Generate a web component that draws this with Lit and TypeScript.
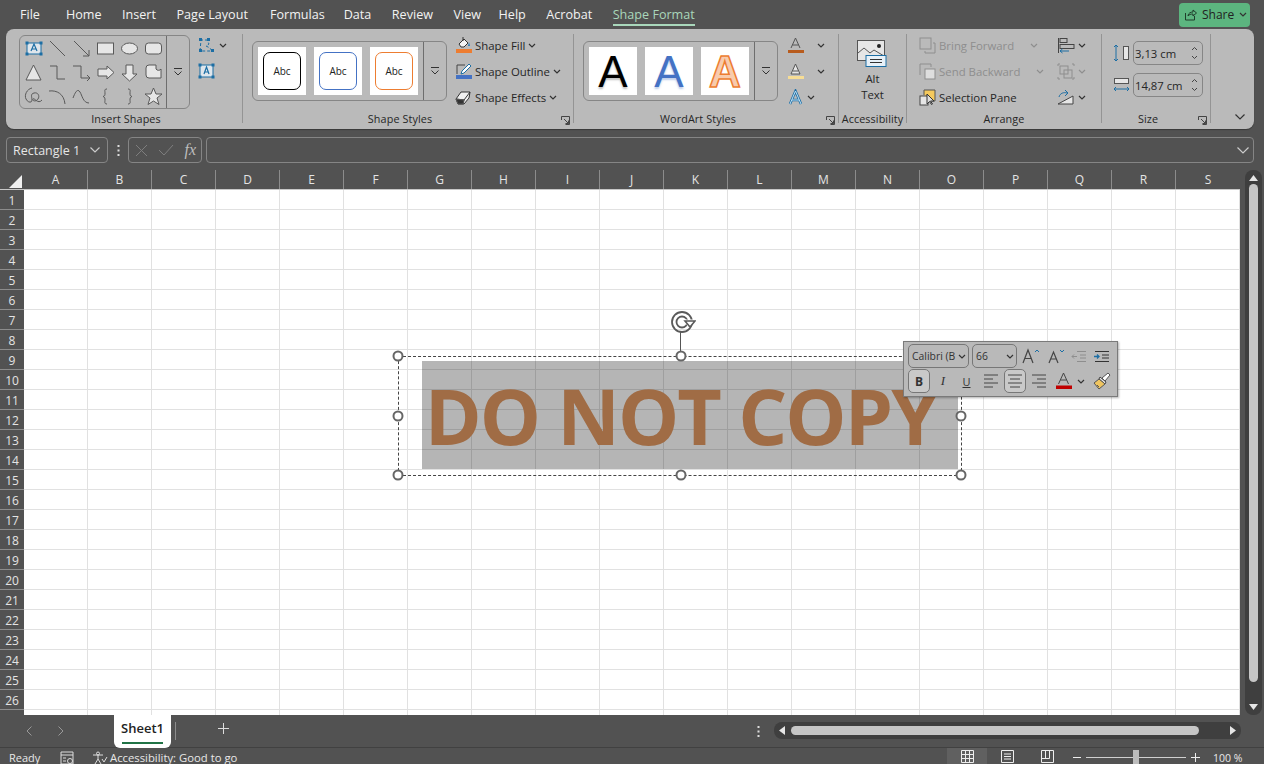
import { LitElement, html, css, svg } from "lit";
import { customElement } from "lit/decorators.js";

const ic = (w: number, h: number, body: unknown, cls = "") =>
  html`<svg class="ic ${cls}" width=${w} height=${h} viewBox="0 0 ${w} ${h}" fill="none" stroke="#595959" stroke-width="1">${body}</svg>`;

const chev = (cls = "") => html`<svg class="chev ${cls}" width="8" height="5" viewBox="0 0 8 5" fill="none" stroke="currentColor" stroke-width="1.2"><path d="M1 1l3 3 3-3"/></svg>`;
const launcher = html`<svg class="launch" width="9" height="9" viewBox="0 0 9 9" fill="none" stroke="#444" stroke-width="1"><path d="M.5 4V.5H8.5V8.5H4.5M3 3l4.5 4.5M7.5 4.5v3h-3"/></svg>`;
const scroller = html`<div class="scroller"><svg width="10" height="10" viewBox="0 0 10 10" fill="none" stroke="#333"><path d="M1 1.5h8" /><path d="M1.5 4.5L5 8l3.5-3.5" /></svg></div>`;

const F = "#e6e6e6";
const shapes = [
  svg`<rect x="4" y="5" width="14" height="11" fill="#dfe6ec" stroke="#1c6ea4"/><path d="M8 13l3-7 3 7M9 11h4" stroke="#1c6ea4" stroke-width="1.2"/><g fill="#1c6ea4" stroke="none"><rect x="2.5" y="3.5" width="3" height="3"/><rect x="16.5" y="3.5" width="3" height="3"/><rect x="2.5" y="14.5" width="3" height="3"/><rect x="16.5" y="14.5" width="3" height="3"/></g>`,
  svg`<path d="M3 3l15 15"/>`,
  svg`<path d="M3 3l15 15M18 12v6h-6"/>`,
  svg`<rect x="2.5" y="5" width="16" height="11" fill="${F}"/>`,
  svg`<ellipse cx="10.5" cy="10.5" rx="8" ry="5.5" fill="${F}"/>`,
  svg`<rect x="2.5" y="5" width="16" height="11" rx="3" fill="${F}"/>`,
  svg`<path d="M10.5 3l7.5 15H3z" fill="${F}"/>`,
  svg`<path d="M3 4h7v13h8"/>`,
  svg`<path d="M2 4h8v12h9M16 13l3 3-3 3"/>`,
  svg`<path d="M3 7h9V4l7 6.5-7 6.5v-3H3z" fill="${F}"/>`,
  svg`<path d="M7 3h7v9h4l-7.5 7L3 12h4z" fill="${F}"/>`,
  svg`<path d="M3 6a3 3 0 013-3h7v4a3 3 0 005 0v9H6a3 3 0 01-3-3z" fill="${F}"/>`,
  svg`<path d="M9 2C4 3 1 9 3 13s6 4 6 1-2-6 2-7 6 3 4 6-6 2-5 0 5 6 9 1"/>`,
  svg`<path d="M2 5c8-1 15 3 16 13"/>`,
  svg`<path d="M2 12c3-8 5-9 7-6s3 11 9 11"/>`,
  svg`<path d="M12 3c-3 0-2 2-2 4s0 3-2 3.500c2 .5 2 2 2 3.500s-1 4 2 4"/>`,
  svg`<path d="M9 3c3 0 2 2 2 4s0 3 2 3.500c-2 .5-2 2-2 3.500s1 4-2 4"/>`,
  svg`<path d="M10.500 2l2.500 6h6l-5 4 2 6.500-5.500-3.500L5 18.500 7 12 2 8h6z" fill="${F}"/>`,
];

const alignL = svg`<path d="M0 1h14M0 5h9M0 9h14M0 13h9" stroke="#444"/>`;
const alignC = svg`<path d="M0 1h14M2 5h10M0 9h14M2 13h10" stroke="#444"/>`;
const alignR = svg`<path d="M0 1h14M5 5h9M0 9h14M5 13h9" stroke="#444"/>`;

@customElement("app-root")
export class AppRoot extends LitElement {
  static styles = css`
    :host { display: flex; flex-direction: column; width: 1264px; height: 764px; overflow: hidden; background: #525252; color: #f2f2f2; font-family: "Open Sans", "Noto Sans", sans-serif; font-size: 12px; }
    svg { display: block; flex: none; }
    .menu { height: 29px; flex: none; display: flex; align-items: center; padding-left: 20px; font-size: 12.600px; }
    .menu .tab { margin-right: 20.500px; position: relative; white-space: nowrap; }
    .menu .tab.first { margin-right: 26px; }
    .menu .tab.pl { margin-right: 22px; }
    .menu .tab.fm { margin-right: 19px; }
    .menu .tab.vw-t { margin-right: 17.500px; }
    .menu .tab.active { color: #a9d7bb; }
    .menu .tab.active::after { content: ""; position: absolute; left: 0; right: 0; bottom: -3px; height: 2px; background: #a9d7bb; }
    .share { margin-left: auto; margin-right: 14px; width: 71px; height: 24px; border-radius: 4px; background: #5cb57f; color: #222; display: flex; align-items: center; gap: 5px; padding-left: 5px; box-sizing: border-box; font-size: 12px; }
    .ribbon { flex: none; height: 100px; margin: 0 10px 0 6px; background: #bababa; border-radius: 8px; display: flex; color: #262626; font-size: 11.400px; box-shadow: 0 1px 1px rgba(0,0,0,.3); }
    .sep { width: 1px; background: #949494; margin: 5px 0 6px; flex: none; }
    .grp { flex: none; display: flex; flex-direction: column; }
    .body { flex: none; height: 81px; display: flex; box-sizing: border-box; }
    .glabel { flex: none; height: 18px; line-height: 18px; text-align: center; position: relative; font-size: 10.800px; letter-spacing: .1px; white-space: nowrap; }
    .launch { position: absolute; right: 3px; top: 6px; }
    .gallery { flex: none; display: flex; border: 1px solid #868686; border-radius: 6px; box-sizing: border-box; }
    .scroller { flex: none; width: 23px; box-sizing: border-box; border-left: 1px solid #6e6e6e; display: flex; align-items: center; justify-content: center; }
    .shapes { display: grid; grid-template-columns: repeat(6, 24px); grid-auto-rows: 24px; padding: 0; place-items: center; width: 146px; box-sizing: border-box; margin-left: 1px; }
    .swatches { display: flex; gap: 8px; padding: 5px; }
    .sw { width: 48px; height: 48px; background: #fff; display: flex; align-items: center; justify-content: center; }
    .abc { width: 38px; height: 38px; box-sizing: border-box; border-radius: 7px; border: 1.500px solid #000; display: flex; align-items: center; justify-content: center; color: #222; font-size: 10px; }
    .abc.b { border: 1px solid #4472c4; }
    .abc.o { border: 1px solid #ed7d31; }
    .wa { font-family: "Liberation Sans", sans-serif; font-size: 44px; line-height: 1; position: relative; top: 1px; }
    .wa.k { color: #000; text-shadow: 0 2px 2px rgba(0,0,0,.25); }
    .wa.bl { color: #4472c4; text-shadow: 0 2px 2px rgba(68,114,196,.35); }
    .wa.or { color: #f8cbad; font-weight: 700; -webkit-text-stroke: 1.500px #ed7d31; }
    .col { flex: none; display: flex; flex-direction: column; }
    .row { height: 26px; display: flex; align-items: center; white-space: nowrap; }
    .chev { color: #333; }
    .chev.off { color: #8e8e8e; }
    .off { color: #8e8e8e; }
    .edit { margin: 6px 0 0 7px; gap: 6px; }
    .edit .row { gap: 2px; }
    .btns { margin: 3px 0 0 8px; }
    .btns .row { gap: 3px; }
    .wacol { margin: 3px 0 0 9px; }
    .wacol .row { gap: 3px; }
    .alt { flex: 1; display: flex; flex-direction: column; align-items: center; padding-top: 10px; line-height: 16px; font-size: 11.400px; }
    .alt svg { margin-bottom: 4px; }
    .arr { margin: 3px 0 0 12px; width: 126px; }
    .arr .row { gap: 3px; }
    .arr .row .chev { margin-left: 13px; }
    .arr2 { margin: 3px 0 0 12px; }
    .arr2 .row { gap: 3px; }
    .size { margin: 12px 0 0 11px; gap: 8px; }
    .size .row { height: 24px; gap: 3px; }
    .spin { width: 70px; height: 24px; box-sizing: border-box; border: 1px solid #868686; border-radius: 5px; display: flex; align-items: center; padding: 0 4px 0 1px; justify-content: space-between; font-size: 11.300px; }
    .collapse { flex: 1; position: relative; }
    .collapse svg { position: absolute; right: 9px; bottom: 9px; }
    .fbar { flex: none; height: 26px; margin: 8px 10px 7px 6px; display: flex; color: #e6e6e6; }
    .fbox { border: 1px solid #858585; border-radius: 4px; box-sizing: border-box; display: flex; align-items: center; }
    .name { width: 102px; padding: 0 7px 0 6px; justify-content: space-between; font-size: 12.500px; }
    .dots { width: 20px; display: flex; align-items: center; justify-content: center; }
    .fx { width: 74px; padding: 0 5px 0 6px; justify-content: space-between; margin-right: 4px; }
    .fxt { font-family: "Liberation Serif", serif; font-style: italic; font-size: 16px; color: #bdbdbd; }
    .finput { flex: 1; justify-content: flex-end; padding-right: 4px; }
    .main { flex: none; height: 545px; display: flex; }
    .work { flex: none; width: 1240px; display: flex; flex-direction: column; }
    .cols { flex: none; height: 20px; display: flex; box-sizing: border-box; border-bottom: 1px solid #c8c8c8; font-size: 12px; color: #e4e4e4; }
    .corner { flex: none; width: 24px; position: relative; }
    .corner svg { position: absolute; left: 9px; top: 5px; }
    .col-h { flex: none; width: 64px; box-sizing: border-box; border-right: 1px solid #8c8c8c; text-align: center; line-height: 19px; }
    .col-h:last-child { border-right: 0; }
    .below { flex: 1; display: flex; min-height: 0; overflow: hidden; }
    .rows { flex: none; width: 24px; box-sizing: border-box; font-size: 12px; color: #e4e4e4; }
    .row-h { height: 20px; box-sizing: border-box; border-bottom: 1px solid #8c8c8c; text-align: center; line-height: 21px; }
    .sheet { flex: 1; position: relative; background-color: #fff; background-image: linear-gradient(to right, transparent 63px, #e1e1e1 63px), linear-gradient(to bottom, transparent 19px, #e1e1e1 19px); background-size: 64px 20px; }
    .shape { position: absolute; left: 398px; top: 171px; width: 536px; height: 108px; background: rgba(0,0,0,.29); display: flex; align-items: center; justify-content: center; overflow: visible; }
    .wm { font-family: "Open Sans", sans-serif; font-weight: 700; font-size: 77px; line-height: 1; color: #a06c45; white-space: nowrap; letter-spacing: -1.900px; position: relative; left: -9px; }
    .sel { position: absolute; left: 374px; top: 166px; width: 564px; height: 120px; border: 1px dashed #444; box-sizing: border-box; }
    .h { position: absolute; width: 11px; height: 11px; box-sizing: border-box; border-radius: 50%; border: 2px solid #666; background: #fff; transform: translate(-50%, -50%); }
    .stem { position: absolute; left: 656px; top: 142px; width: 1px; height: 24px; background: #555; }
    .rot { position: absolute; left: 646px; top: 120px; }
    .mini { position: absolute; left: 879px; top: 151px; width: 215px; height: 56px; box-sizing: border-box; border: 1px solid #7a7a7a; background: #b9b9b9; box-shadow: 1px 1px 2px rgba(0,0,0,.3); padding: 2px 0 0 4px; color: #333; display: flex; flex-direction: column; gap: 1px; }
    .mrow { display: flex; align-items: center; height: 24px; }
    .mbox { height: 24px; box-sizing: border-box; border: 1px solid #777; border-radius: 5px; display: flex; align-items: center; justify-content: space-between; padding: 0 2px 0 3px; font-size: 10.400px; margin-right: 3px; font-family: "Open Sans", sans-serif; flex: none; }
    .mbtn { display: flex; align-items: center; justify-content: center; height: 24px; flex: none; font-size: 12px; }
    .mbtn.on { border: 1px solid #777; border-radius: 5px; background: #c9c9c9; box-sizing: border-box; }
    .vs { flex: none; width: 24px; display: flex; justify-content: center; }
    .vtrack { margin-left: 3px; width: 17px; height: 545px; background: #3f3f3f; border-radius: 8px; display: flex; flex-direction: column; align-items: center; box-sizing: border-box; padding-top: 5px; }
    .vthumb { width: 9px; height: 498px; background: #c6c6c6; border-radius: 5px; margin: 3px 0 auto; }
    .tabs { flex: none; height: 32px; display: flex; align-items: flex-start; position: relative; }
    .navs { width: 114px; height: 32px; display: flex; align-items: center; padding-left: 25px; gap: 24px; box-sizing: border-box; flex: none; }
    .stab { flex: none; width: 57px; height: 33px; background: #fff; border-radius: 0 0 6px 6px; color: #222; position: relative; text-align: center; line-height: 27px; font-size: 13px; font-weight: 600; box-sizing: border-box; }
    .stab::after { content: ""; position: absolute; left: 8px; right: 8px; bottom: 4px; height: 2px; background: #217346; }
    .tdiv { flex: none; width: 1px; height: 18px; background: #8c8c8c; margin: 7px 0 0 4px; }
    .plus { margin: 8px 0 0 42px; flex: none; }
    .tdots { margin: 11px 0 0 528px; flex: none; }
    .hs { flex: none; margin: 7px 0 0 14px; width: 467px; height: 17px; background: #3f3f3f; border-radius: 8px; display: flex; align-items: center; padding: 0 5px; box-sizing: border-box; }
    .hthumb { width: 408px; height: 9px; background: #c6c6c6; border-radius: 5px; margin: 0 auto 0 6px; }
    .status { flex: none; height: 17px; border-top: 1px solid #414141; display: flex; align-items: center; font-size: 11px; color: #e8e8e8; white-space: nowrap; box-sizing: border-box; padding-top: 3px; }
    .ready { margin-left: 9px; width: 51px; }
    .macc { width: 32px; }
    .acc { display: flex; align-items: center; gap: 2px; font-size: 11.300px; }
    .views { margin-left: auto; display: flex; align-self: stretch; margin-top: -3px; }
    .vw { width: 40px; display: flex; align-items: center; justify-content: center; }
    .vw.on { background: #606060; }
    .zoomb { display: flex; align-items: center; margin-right: 22px; }
    .zline { width: 100px; height: 1px; background: #d0d0d0; position: relative; margin: 0 5px; }
    .zline::after { content: ""; position: absolute; left: 47px; top: -7px; width: 6px; height: 15px; background: #bdbdbd; }
    .pct { margin-left: 13px; width: 29px; font-size: 10.500px; }
  `;

  render() {
    const colsL = "ABCDEFGHIJKLMNOPQRS".split("");
    const rows = Array.from({ length: 27 }, (_, i) => i + 1);
    const handles: [number, number][] = [[374.5, 166.5], [657, 166.5], [937.5, 166.5], [374.5, 226], [937.5, 226], [374.5, 285.5], [657, 285.5], [937.5, 285.5]];
    return html`
      <div class="menu">
        <span class="tab first">File</span><span class="tab">Home</span><span class="tab">Insert</span><span class="tab pl">Page Layout</span><span class="tab fm">Formulas</span><span class="tab">Data</span><span class="tab">Review</span><span class="tab vw-t">View</span><span class="tab">Help</span><span class="tab">Acrobat</span><span class="tab active">Shape Format</span>
        <div class="share">
          ${ic(13, 13, svg`<path d="M1.500 5v7h9V8M4 8c0-3 3-4 5-4V2l3.500 3L9 8V6c-2 0-4 .5-5 2z" stroke="#1f3d2b"/>`)}
          <span>Share</span>${chev()}
        </div>
      </div>

      <div class="ribbon">
        <div class="grp" style="width:236px">
          <div class="body" style="padding-left:13px">
            <div class="gallery" style="width:171px;height:74px;margin-top:6px">
              <div class="shapes">${shapes.map((s) => ic(21, 21, s))}</div>
              ${scroller}
            </div>
            <div class="col edit">
              <div class="row" style="height:20px">
                ${ic(20, 18, svg`<path d="M3 15l1-11h6l2 4-3 2 4 2 2 3z" stroke="#1c6ea4" stroke-dasharray="3 2"/><g fill="#1c6ea4" stroke="none"><rect x="2" y="2" width="3" height="3"/><rect x="10" y="2" width="3" height="3"/><rect x="2" y="13" width="3" height="3"/><rect x="14" y="13" width="3" height="3"/></g>`)}${chev()}
              </div>
              <div class="row" style="height:20px">
                ${ic(20, 18, svg`<rect x="3" y="3" width="13" height="12" fill="#dfe6ec" stroke="#1c6ea4"/><path d="M7 12l2.500-7 2.500 7M8 10h3" stroke="#1c6ea4" stroke-width="1.200"/><g fill="#1c6ea4" stroke="none"><rect x="1.500" y="1.500" width="3" height="3"/><rect x="14.500" y="1.500" width="3" height="3"/><rect x="1.500" y="13.500" width="3" height="3"/><rect x="14.500" y="13.500" width="3" height="3"/></g>`)}
              </div>
            </div>
          </div>
          <div class="glabel" style="padding-left:4px">Insert Shapes</div>
        </div>
        <div class="sep"></div>

        <div class="grp" style="width:330px">
          <div class="body" style="padding-left:9px">
            <div class="gallery" style="width:195px;height:60px;margin-top:12px">
              <div class="swatches">
                <div class="sw"><div class="abc">Abc</div></div>
                <div class="sw"><div class="abc b">Abc</div></div>
                <div class="sw"><div class="abc o">Abc</div></div>
              </div>
              ${scroller}
            </div>
            <div class="col btns">
              <div class="row">${ic(17, 17, svg`<path d="M4 7l5-5 4 4-4 4H6zM8 0v4" stroke="#333" fill="#f4f4f4"/><path d="M14 5l1 4h-2z" fill="#2a7ab5" stroke="none"/><rect x="1" y="12" width="16" height="4" fill="#ed7d31" stroke="none"/>`)}<span>Shape Fill</span>${chev()}</div>
              <div class="row">${ic(17, 17, svg`<path d="M2 11V2h8" stroke="#444"/><path d="M14 1L7 8l-1 3 3-1 7-7z" stroke="#1c6ea4" fill="#fff"/><rect x="1" y="12" width="16" height="4" fill="#4472c4" stroke="none"/>`)}<span>Shape Outline</span>${chev()}</div>
              <div class="row">${ic(17, 17, svg`<path d="M1 10l5-7h9l-1 6-5 6H3z" fill="#f0f0f0" stroke="#333"/><path d="M1 10l8 1 6-8M9 11l-1 4" stroke="#333"/><path d="M1 10l8 1-1 4H3z" fill="#333"/>`)}<span>Shape Effects</span>${chev()}</div>
            </div>
          </div>
          <div class="glabel" style="padding-right:16px">Shape Styles${launcher}</div>
        </div>
        <div class="sep"></div>

        <div class="grp" style="width:264px">
          <div class="body" style="padding-left:9px">
            <div class="gallery" style="width:195px;height:60px;margin-top:12px">
              <div class="swatches">
                <div class="sw"><span class="wa k">A</span></div>
                <div class="sw"><span class="wa bl">A</span></div>
                <div class="sw"><span class="wa or">A</span></div>
              </div>
              ${scroller}
            </div>
            <div class="col wacol">
              <div class="row">${ic(17, 17, svg`<path d="M4 11l4.500-10L13 11M5.500 8h6" stroke="#555"/><rect x="1" y="13" width="16" height="3" fill="#b85c1e" stroke="none"/>`)}<span style="width:7px"></span>${chev()}</div>
              <div class="row">${ic(17, 17, svg`<path d="M4 11l4.500-10L13 11zM6 8h5" stroke="#555" fill="#e5e5e5"/><rect x="1" y="13" width="16" height="3" fill="#f7dd95" stroke="none"/>`)}<span style="width:7px"></span>${chev()}</div>
              <div class="row">${ic(17, 17, svg`<path d="M3 15L8.500 2 14 15M5 11h7" stroke="#1c6ea4" stroke-width="2.500"/><path d="M3 15L8.500 2 14 15M5 11h7" stroke="#bfe0f5" stroke-width="1"/>`)}${chev()}</div>
            </div>
          </div>
          <div class="glabel" style="padding-right:16px">WordArt Styles${launcher}</div>
        </div>
        <div class="sep"></div>

        <div class="grp" style="width:67px">
          <div class="body">
            <div class="alt">
              ${ic(34, 28, svg`<rect x="1.500" y="1.500" width="27" height="20" fill="#e6e6e6" stroke="#555"/><path d="M2 14l6-5 6 5 4-3 10 6" stroke="#555"/><circle cx="23" cy="7" r="2" fill="#222" stroke="none"/><rect x="10" y="16.500" width="20" height="11" fill="#e8f1f8" stroke="#1c6ea4"/><path d="M14 20.500h12M14 23.500h12" stroke="#333"/>`)}
              <span>Alt</span><span>Text</span>
            </div>
          </div>
          <div class="glabel">Accessibility</div>
        </div>
        <div class="sep"></div>

        <div class="grp" style="width:194px">
          <div class="body">
            <div class="col arr">
              <div class="row off">${ic(17, 17, svg`<g stroke="#8e8e8e"><rect x="1" y="1" width="11" height="11"/><path d="M14 6h2v10H6v-2"/></g>`)}<span>Bring Forward</span>${chev("off")}</div>
              <div class="row off">${ic(17, 17, svg`<g stroke="#8e8e8e"><path d="M1 12V1h11v3"/><rect x="6" y="6" width="10" height="10" fill="#dedede"/></g>`)}<span>Send Backward</span>${chev("off")}</div>
              <div class="row">${ic(17, 17, svg`<path d="M5 6V1h11v11h-3" fill="#f4c95d" stroke="#555"/><rect x="1" y="7" width="8" height="9" fill="#e6e6e6" stroke="#444"/><path d="M8 5v10l2.500-2.500 2 3 1-.5-2-3H15z" fill="#ddd" stroke="#333"/>`)}<span>Selection Pane</span></div>
            </div>
            <div class="col arr2">
              <div class="row">${ic(18, 17, svg`<path d="M1.500 1v15" stroke="#444"/><rect x="3" y="1.500" width="7" height="4" stroke="#444"/><rect x="3" y="7.500" width="14" height="4" stroke="#444"/><path d="M12 14H3m2.500-2L3 14l2.500 2" stroke="#1c6ea4"/>`)}${chev()}</div>
              <div class="row">${ic(18, 17, svg`<g stroke="#8e8e8e" fill="none"><rect x="3" y="3" width="8" height="8"/><rect x="7" y="7" width="8" height="8"/><path d="M1 1h2M15 1h2M1 16h2M15 16h2M1 1v2M17 1v2M1 14v2M17 14v2"/></g>`)}${chev("off")}</div>
              <div class="row">${ic(18, 17, svg`<path d="M1 15l15-8v8z" stroke="#444" fill="#e6e6e6"/><path d="M2 8c1-4 5-5 8-4m-2-3l3 3-3 3" stroke="#1c6ea4"/>`)}${chev()}</div>
            </div>
          </div>
          <div class="glabel">Arrange</div>
        </div>
        <div class="sep"></div>

        <div class="grp" style="width:108px">
          <div class="body">
            <div class="col size">
              <div class="row">
                ${ic(17, 18, svg`<path d="M3 1v16M1 3l2-2 2 2M1 15l2 2 2-2" stroke="#1c6ea4"/><rect x="10.500" y="2.500" width="5" height="13" fill="#e6e6e6" stroke="#555"/>`)}
                <div class="spin"><span>3,13 cm</span><svg width="7" height="14" viewBox="0 0 7 14" fill="none" stroke="#444"><path d="M1 4l2.500-2.500L6 4M1 10l2.500 2.500L6 10"/></svg></div>
              </div>
              <div class="row">
                ${ic(17, 18, svg`<rect x="1.500" y="2.500" width="14" height="5" fill="#e6e6e6" stroke="#555"/><path d="M1 13h15M3 11l-2 2 2 2M14 11l2 2-2 2" stroke="#1c6ea4"/>`)}
                <div class="spin"><span>14,87 cm</span><svg width="7" height="14" viewBox="0 0 7 14" fill="none" stroke="#444"><path d="M1 4l2.500-2.500L6 4M1 10l2.500 2.500L6 10"/></svg></div>
              </div>
            </div>
          </div>
          <div class="glabel" style="padding-right:16px">Size${launcher}</div>
        </div>
        <div class="sep"></div>

        <div class="collapse"><svg width="10" height="6" viewBox="0 0 10 6" fill="none" stroke="#333" stroke-width="1.200"><path d="M.5.5L5 5 9.500.5"/></svg></div>
      </div>

      <div class="fbar">
        <div class="fbox name"><span>Rectangle 1</span><svg width="10" height="6" viewBox="0 0 10 6" fill="none" stroke="#ccc" stroke-width="1.200"><path d="M.5.500L5 5 9.500.5"/></svg></div>
        <div class="dots"><svg width="3" height="13" viewBox="0 0 3 13" fill="#ddd"><rect width="2" height="2" x=".5" y="1"/><rect width="2" height="2" x=".5" y="5.500"/><rect width="2" height="2" x=".5" y="10"/></svg></div>
        <div class="fbox fx">
          <svg width="13" height="13" viewBox="0 0 13 13" fill="none" stroke="#7e7e7e"><path d="M1 1l11 11M12 1L1 12"/></svg>
          <svg width="16" height="12" viewBox="0 0 16 12" fill="none" stroke="#7e7e7e"><path d="M1 6l5 5L15 1"/></svg>
          <span class="fxt">fx</span>
        </div>
        <div class="fbox finput" style="flex:1"><svg width="12" height="7" viewBox="0 0 12 7" fill="none" stroke="#ccc" stroke-width="1.200"><path d="M.5.500L6 6l5.500-5.500"/></svg></div>
      </div>

      <div class="main">
        <div class="work">
          <div class="cols">
            <div class="corner"><svg width="13" height="13" viewBox="0 0 13 13" fill="#f0f0f0"><path d="M13 0v13H0z"/></svg></div>
            ${colsL.map((c) => html`<div class="col-h">${c}</div>`)}
          </div>
          <div class="below">
            <div class="rows">${rows.map((r) => html`<div class="row-h">${r < 27 ? r : ""}</div>`)}</div>
            <div class="sheet">
              <div class="shape"><span class="wm">DO NOT COPY</span></div>
              <div class="sel"></div>
              <div class="stem"></div>
              <svg class="rot" width="26" height="24" viewBox="0 0 26 24" fill="none" stroke="#5a5a5a" stroke-width="1.800"><circle cx="12" cy="12" r="10"/><circle cx="12" cy="12" r="5.500"/><path d="M13 9.500h12.500V11l-6.500 7z" fill="#fff" stroke="none"/><path d="M15 11h10l-5 6z" fill="#fff" stroke-width="1.600"/></svg>
              ${handles.map(([x, y]) => html`<div class="h" style="left:${x - 0.5}px;top:${y - 0.5}px"></div>`)}
              <div class="mini">
                <div class="mrow">
                  <div class="mbox" style="width:61px"><span>Calibri (B</span>${chev()}</div>
                  <div class="mbox" style="width:45px;margin-right:1px"><span>66</span>${chev()}</div>
                  <div class="mbtn" style="width:25px">${ic(18, 16, svg`<path d="M1 15L6 2l5 13M3 10.500h6" stroke="#444" stroke-width="1.200"/><path d="M13 4l2-2 2 2" stroke="#1c6ea4"/>`)}</div>
                  <div class="mbtn" style="width:25px">${ic(18, 16, svg`<path d="M2 15L6.500 4 11 15M4 11h5" stroke="#444" stroke-width="1.200"/><path d="M13 2l2 2 2-2" stroke="#1c6ea4"/>`)}</div>
                  <div class="mbtn" style="width:21px">${ic(15, 13, svg`<path d="M6 1.500h9M9 5h6M9 8h6M6 11.500h9" stroke="#8e8e8e"/><path d="M6 6.500H1m2-2l-2 2 2 2" stroke="#8e8e8e"/>`)}</div>
                  <div class="mbtn" style="width:25px">${ic(15, 13, svg`<path d="M1 1.500h14M8 5h7M8 8h7M1 11.500h14" stroke="#333"/><path d="M0 6.500h5M3 4.500l2 2-2 2" stroke="#1c6ea4" stroke-width="1.300"/>`)}</div>
                </div>
                <div class="mrow">
                  <div class="mbtn on" style="width:22px;font-weight:700;margin-right:1px">B</div>
                  <div class="mbtn" style="width:24px;font-family:'Liberation Serif',serif;font-style:italic;font-size:13px;">I</div>
                  <div class="mbtn" style="width:23px;text-decoration:underline;font-size:11px">U</div>
                  <div class="mbtn" style="width:25px">${ic(14, 14, alignL)}</div>
                  <div class="mbtn on" style="width:22px;margin:0 1px">${ic(14, 14, alignC)}</div>
                  <div class="mbtn" style="width:24px">${ic(14, 14, alignR)}</div>
                  <div class="mbtn" style="width:24px">${ic(17, 18, svg`<path d="M3.500 12L8.500 1 13.500 12M5.500 8h6" stroke="#444"/><rect x="1" y="13.500" width="16" height="3.500" fill="#c00000" stroke="none"/>`)}</div>
                  <span style="margin:0 8px 0 2px">${chev()}</span>
                  ${ic(18, 18, svg`<path d="M15 1l2 2-5 6-3-3z" fill="#fff" stroke="#555"/><path d="M7 5l6 5-1 2-6-5z" fill="#e8e8e8" stroke="#444"/><path d="M6 7L1 11l5 6 6-5z" fill="#f0c560" stroke="#555"/><path d="M4 13l2 2" stroke="#555"/>`)}
                </div>
              </div>
            </div>
          </div>
        </div>
        <div class="vs"><div class="vtrack">
          <svg width="9" height="6" viewBox="0 0 9 6" fill="#e6e6e6"><path d="M4.500 0L9 6H0z"/></svg>
          <div class="vthumb"></div>
          <svg style="margin-bottom:5px" width="9" height="6" viewBox="0 0 9 6" fill="#e6e6e6"><path d="M4.500 6L9 0H0z"/></svg>
        </div></div>
      </div>

      <div class="tabs">
        <div class="navs">
          <svg width="8" height="10" viewBox="0 0 8 10" fill="none" stroke="#999"><path d="M6.500.5L2 5l4.500 4.500"/></svg>
          <svg width="8" height="10" viewBox="0 0 8 10" fill="none" stroke="#999"><path d="M1.500.5L6 5 1.500 9.500"/></svg>
        </div>
        <div class="stab">Sheet1</div>
        <div class="tdiv"></div>
        <svg class="plus" width="11" height="11" viewBox="0 0 11 11" stroke="#ddd"><path d="M5.500 0v11M0 5.500h11"/></svg>
        <svg class="tdots" width="3" height="11" viewBox="0 0 3 11" fill="#ddd"><rect width="2" height="2" x=".5" y="0"/><rect width="2" height="2" x=".5" y="4.500"/><rect width="2" height="2" x=".5" y="9"/></svg>
        <div class="hs">
          <svg width="6" height="9" viewBox="0 0 6 9" fill="#e6e6e6"><path d="M0 4.500L6 0v9z"/></svg>
          <div class="hthumb"></div>
          <svg width="6" height="9" viewBox="0 0 6 9" fill="#e6e6e6"><path d="M6 4.500L0 0v9z"/></svg>
        </div>
      </div>

      <div class="status">
        <span class="ready">Ready</span>
        <div class="macc">${ic(15, 14, svg`<path d="M1 1h12v12H1zM1 4h12M3 7h3M3 10h3" stroke="#ddd"/><circle cx="10" cy="10" r="2.500" stroke="#ddd"/>`)}</div>
        <div class="acc">${ic(16, 14, svg`<circle cx="6" cy="2.500" r="1.500" stroke="#ddd"/><path d="M1 4h10M6 4v4l-3 5M6 8l3 5M10 8l2 3 3-5" stroke="#ddd"/>`)}<span>Accessibility: Good to go</span></div>
        <div class="views">
          <div class="vw on">${ic(13, 13, svg`<path d="M.5.500h12v12H.5zM4.500.5v12M8.500.5v12M.5 4.500h12M.5 8.500h12" stroke="#eee"/>`)}</div>
          <div class="vw">${ic(13, 13, svg`<path d="M.5.500h12v12H.5zM3 4h7M3 6.500h7M3 9h7" stroke="#eee"/>`)}</div>
          <div class="vw">${ic(13, 13, svg`<path d="M.5.500h12v12H.5zM.5 8.500h8V.5M4.500.5v8" stroke="#eee"/>`)}</div>
        </div>
        <div class="zoomb">
          <svg style="margin-left:6px" width="8" height="1" viewBox="0 0 8 1"><rect width="8" height="1" fill="#eee"/></svg>
          <div class="zline"></div>
          <svg width="9" height="9" viewBox="0 0 9 9" stroke="#eee"><path d="M4.500 0v9M0 4.500h9"/></svg>
          <span class="pct">100 %</span>
        </div>
      </div>
    `;
  }
}
